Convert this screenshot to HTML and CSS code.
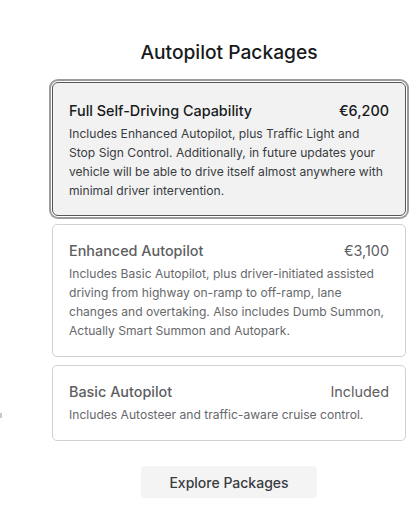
FILE: index.html
```html
<!DOCTYPE html>
<html lang="en">
<head>
    <meta charset="UTF-8">
    <meta name="viewport" content="width=device-width, initial-scale=1.0">
    <title>Autopilot Packages</title>
    <link rel="stylesheet" href="styles.css">
</head>
<body>
    <div class="packages">
        <h1 class="title">Autopilot Packages</h1>

        <!-- selected package -->
        <div class="card selected">
            <div class="card-head">
                <span class="name">Full Self-Driving Capability</span>
                <span class="price">€6,200</span>
            </div>
            <p class="desc">Includes Enhanced Autopilot, plus Traffic Light and Stop Sign Control. Additionally, in future updates your vehicle will be able to drive itself almost anywhere with minimal driver intervention.</p>
        </div>

        <div class="card">
            <div class="card-head">
                <span class="name">Enhanced Autopilot</span>
                <span class="price">€3,100</span>
            </div>
            <p class="desc">Includes Basic Autopilot, plus driver-initiated assisted driving from highway on-ramp to off-ramp, lane changes and overtaking. Also includes Dumb Summon, Actually Smart Summon and Autopark.</p>
        </div>

        <div class="card">
            <div class="card-head">
                <span class="name">Basic Autopilot</span>
                <span class="price">Included</span>
            </div>
            <p class="desc">Includes Autosteer and traffic-aware cruise control.</p>
        </div>

        <div class="actions">
            <button class="explore">Explore Packages</button>
        </div>
    </div>
    <span class="stray"></span>
</body>
</html>
```

FILE: styles.css
```css
body {
    margin: 0;
    background: #fff;
    font-family: Inter, "Noto Sans", Arial, sans-serif;
    color: #171a20;
}
.packages {
    width: 354px;
    margin-left: 52px;
    padding-top: 40px;
}
.title {
    margin: 0 0 18px;
    font-size: 19.2px;
    line-height: 24px;
    font-weight: 500;
    text-align: center;
    color: #171a20;
}
.card {
    border: 1px solid #d0d1d2;
    border-radius: 5px;
    padding: 16px 16px 16px 16px;
    margin-bottom: 8px;
    color: #5c5e62;
}
.card.selected {
    border: 1px solid #55575b;
    background: #f2f2f2;
    box-shadow: 0 0 0 1px #fff, 0 0 0 3px #9a9b9d;
    border-radius: 6px;
    padding: 18px 16px 15px;
    margin: 0 0 8px;
    color: #171a20;
}
.card-head {
    display: flex;
    justify-content: space-between;
    align-items: baseline;
    font-size: 14.4px;
    line-height: 20px;
}
.name {
    font-weight: 500;
}
.price {
    font-weight: 400;
}
.selected .price {
    font-weight: 500;
}
.desc {
    margin: 3px 0 0;
    padding-right: 4px;
    font-size: 12.1px;
    line-height: 19px;
    color: #66686b;
}
.selected .desc {
    color: #393c41;
}
.actions {
    display: flex;
    justify-content: center;
    padding-top: 17px;
}
.explore {
    width: 176px;
    height: 32px;
    border: none;
    border-radius: 4px;
    background: #f4f4f4;
    font-family: inherit;
    font-size: 14px;
    font-weight: 500;
    color: #393c41;
}
.stray {
    position: absolute;
    left: 0;
    top: 413px;
    width: 2px;
    height: 5px;
    background: #c8c8c8;
}
```
